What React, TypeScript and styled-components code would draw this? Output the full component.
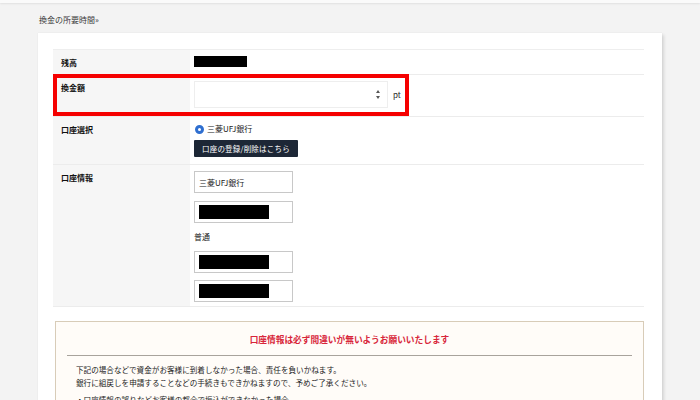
import React from "react";
import styled, { createGlobalStyle } from "styled-components";

const GlobalStyle = createGlobalStyle`
  html, body {
    margin: 0;
    padding: 0;
    background: #f3f3f3;
    font-family: "Noto Sans CJK JP", "Liberation Sans", sans-serif;
    color: #222;
  }
`;

const TopBar = styled.div`
  height: 3px;
  background: #fafafa;
  box-shadow: 0 1px 2px rgba(0, 0, 0, 0.08);
`;

const Breadcrumb = styled.div`
  padding: 9px 0 0 39px;
  height: 21px;
  font-size: 8px;
  line-height: 16px;
  color: #3a3a3a;
`;

const Card = styled.div`
  margin-left: 38px;
  width: 624px;
  background: #fff;
  box-shadow: 2px 2px 3px rgba(0, 0, 0, 0.12), 0 0 1px rgba(0, 0, 0, 0.1);
  padding: 16px 18px 14px 15px;
  box-sizing: border-box;
`;

const Table = styled.div`
  display: flex;
  flex-direction: column;
  border-top: 1px solid #eee;
`;

const Row = styled.div<{ $h: number }>`
  position: relative;
  display: grid;
  grid-template-columns: 137px 1fr;
  height: ${(p) => p.$h}px;
  border-bottom: 1px solid #ececec;
  box-sizing: border-box;
`;

const Label = styled.div`
  background: #f6f6f6;
  padding: 8px 0 0 8px;
  font-size: 8px;
  font-weight: 700;
  line-height: 10px;
  color: #111;
`;

const Value = styled.div<{ $pt?: number }>`
  padding: ${(p) => p.$pt ?? 6}px 0 0 4px;
  font-size: 8px;
  display: flex;
  flex-direction: column;
  align-items: flex-start;
`;

const Redacted = styled.div<{ $w: number; $h: number }>`
  width: ${(p) => p.$w}px;
  height: ${(p) => p.$h}px;
  background: #000;
`;

const InputLine = styled.div`
  display: flex;
  align-items: center;
  gap: 5px;
`;

const NumberBox = styled.div`
  width: 194px;
  height: 27px;
  border: 1px solid #eee;
  box-sizing: border-box;
  display: flex;
  justify-content: flex-end;
  align-items: center;
  padding-right: 7px;
`;

const Spinner = styled.div`
  display: flex;
  flex-direction: column;
  gap: 3px;
`;

const Arrow = styled.span<{ $up?: boolean }>`
  width: 0;
  height: 0;
  border-left: 2px solid transparent;
  border-right: 2px solid transparent;
  ${(p) =>
    p.$up ? "border-bottom: 3px solid #555;" : "border-top: 3px solid #555;"}
`;

const Unit = styled.span`
  font-size: 8px;
`;

const Highlight = styled.span`
  position: absolute;
  left: 0;
  top: -1px;
  width: 356px;
  height: 42px;
  border: 4px solid #f50000;
  box-sizing: border-box;
  pointer-events: none;
`;

const Radio = styled.label`
  display: flex;
  align-items: center;
  gap: 3px;
  font-size: 8px;
  line-height: 10px;
  margin: 1px 0 0 1px;
`;

const RadioDot = styled.span`
  width: 3px;
  height: 3px;
  border-radius: 50%;
  border: 3px solid #2f6fd0;
  background: #fff;
`;

const DarkButton = styled.button`
  margin-top: 6px;
  height: 17px;
  padding: 0 8px;
  background: #1d2736;
  color: #fff;
  border: none;
  border-radius: 1px;
  font-family: inherit;
  font-size: 7.5px;
  letter-spacing: 0.2px;
`;

const TextBox = styled.div<{ $mt?: number }>`
  width: 99px;
  height: 22px;
  margin-top: ${(p) => p.$mt ?? 0}px;
  border: 1px solid #c8c8c8;
  box-sizing: border-box;
  display: flex;
  align-items: center;
  padding-left: 4px;
  font-size: 8px;
`;

const Plain = styled.div`
  margin-top: 8px;
  height: 20px;
  line-height: 12px;
  font-size: 8px;
`;

const Notice = styled.div`
  margin: 14px 0 0 2px;
  border: 1px solid #d8ccb8;
  background: #fffcf8;
  padding: 12px 11px 10px;
`;

const NoticeTitle = styled.div`
  text-align: center;
  color: #d8263a;
  font-size: 8.7px;
  font-weight: 700;
  line-height: 12px;
  padding-bottom: 9px;
  border-bottom: 1px solid #a8a39c;
`;

const NoticeBody = styled.div`
  padding: 7px 0 0 9px;
  font-size: 7.6px;
  line-height: 13px;
  color: #222;
`;

const Gap = styled.div`
  height: 4px;
`;

const App = () => (
  <>
    <GlobalStyle />
    <TopBar />
    <Breadcrumb>換金の所要時間»</Breadcrumb>
    <Card>
      <Table>
        <Row $h={25}>
          <Label>残高</Label>
          <Value $pt={6}>
            <Redacted $w={53} $h={11} />
          </Value>
        </Row>
        <Row $h={42}>
          <Label>換金額</Label>
          <Value $pt={6}>
            <InputLine>
              <NumberBox>
                <Spinner>
                  <Arrow $up />
                  <Arrow />
                </Spinner>
              </NumberBox>
              <Unit>pt</Unit>
            </InputLine>
          </Value>
          <Highlight />
        </Row>
        <Row $h={48}>
          <Label>口座選択</Label>
          <Value $pt={6}>
            <Radio>
              <RadioDot />
              三菱UFJ銀行
            </Radio>
            <DarkButton>口座の登録/削除はこちら</DarkButton>
          </Value>
        </Row>
        <Row $h={142}>
          <Label>口座情報</Label>
          <Value $pt={6}>
            <TextBox>三菱UFJ銀行</TextBox>
            <TextBox $mt={8}>
              <Redacted $w={70} $h={14} />
            </TextBox>
            <Plain>普通</Plain>
            <TextBox>
              <Redacted $w={70} $h={14} />
            </TextBox>
            <TextBox $mt={7}>
              <Redacted $w={70} $h={14} />
            </TextBox>
          </Value>
        </Row>
      </Table>
      <Notice>
        <NoticeTitle>口座情報は必ず間違いが無いようお願いいたします</NoticeTitle>
        <NoticeBody>
          下記の場合などで資金がお客様に到着しなかった場合、責任を負いかねます。
          <br />
          銀行に組戻しを申請することなどの手続きもできかねますので、予めご了承ください。
          <Gap />
          ・口座情報の誤りなどお客様の都合で振込ができなかった場合
        </NoticeBody>
      </Notice>
    </Card>
  </>
);

export default App;
